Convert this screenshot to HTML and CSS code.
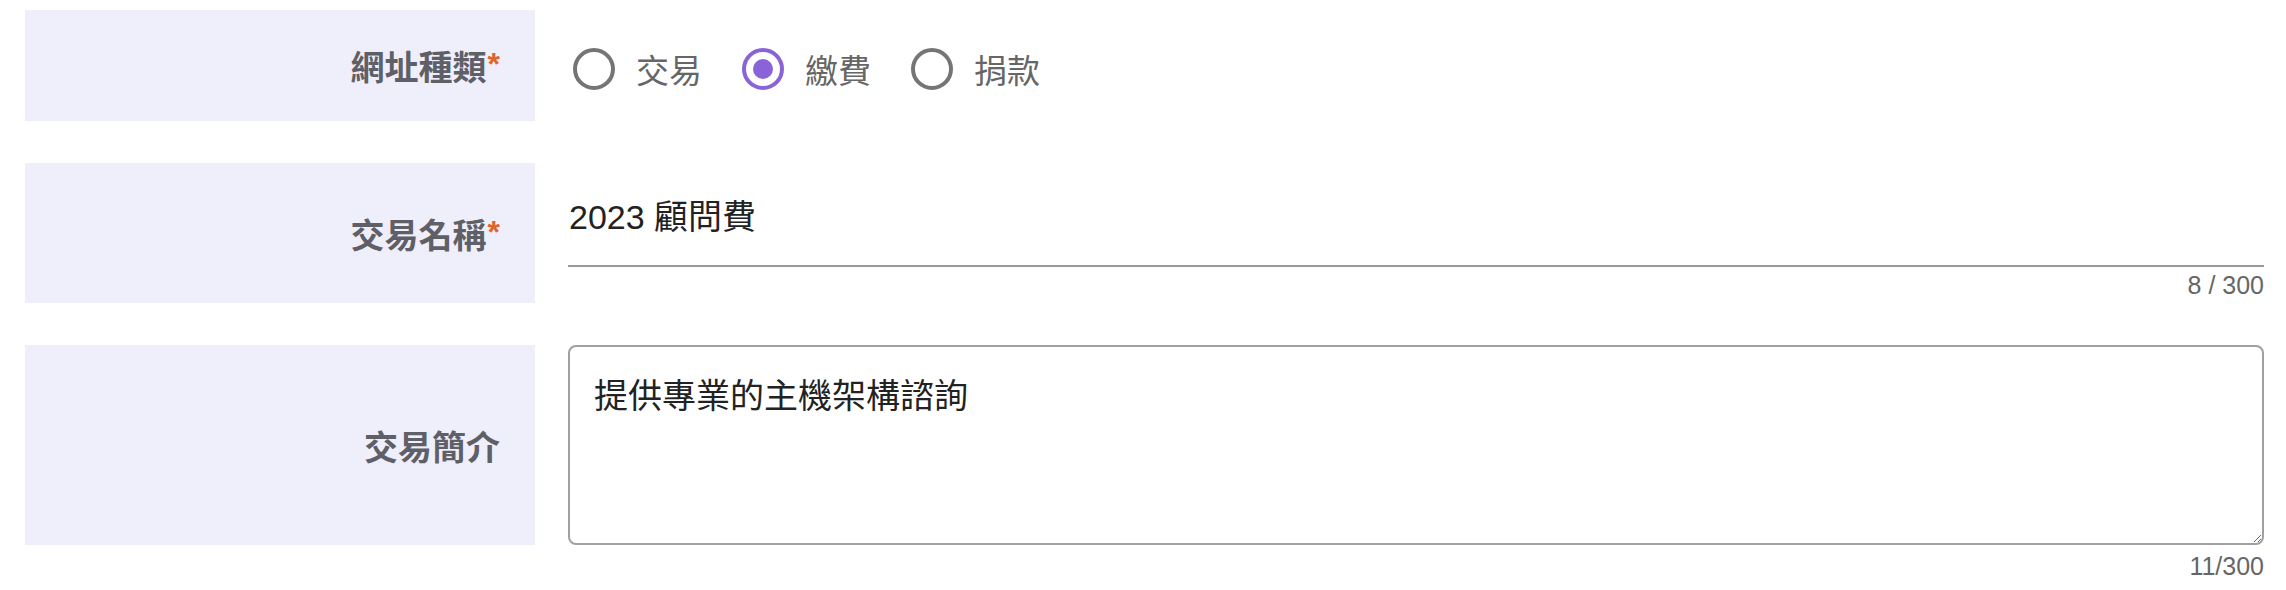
FILE: index.html
```html
<!DOCTYPE html>
<html lang="zh-Hant">
<head>
<meta charset="utf-8">
<title>表單</title>
<link rel="stylesheet" href="styles.css">
</head>
<body>
<form class="form">
  <div class="row row-radio">
    <div class="label">網址種類<span class="req">*</span></div>
    <div class="field radio-group">
      <label class="radio"><input type="radio" name="kind" value="trade"><span>交易</span></label>
      <label class="radio"><input type="radio" name="kind" value="pay" checked><span>繳費</span></label>
      <label class="radio"><input type="radio" name="kind" value="donate"><span>捐款</span></label>
    </div>
  </div>
  <div class="row row-input">
    <div class="label">交易名稱<span class="req">*</span></div>
    <input class="text-input" type="text" value="2023 顧問費">
    <div class="counter">8 / 300</div>
  </div>
  <div class="row row-textarea">
    <div class="label">交易簡介</div>
    <textarea class="textarea">提供專業的主機架構諮詢</textarea>
    <div class="counter">11/300</div>
  </div>
</form>
</body>
</html>
```

FILE: styles.css
```css
* { box-sizing: border-box; }

html, body {
  margin: 0;
  background: #ffffff;
}

body {
  padding: 10px 22px 0 25px;
  font-family: "Liberation Sans", "Noto Sans CJK TC", sans-serif;
}

.form {
  display: flex;
  flex-direction: column;
  gap: 42px;
}

.row {
  display: grid;
  grid-template-columns: 510px 1fr;
  column-gap: 33px;
}

.label {
  grid-column: 1;
  grid-row: 1;
  display: flex;
  align-items: center;
  justify-content: flex-end;
  padding-right: 35px;
  background: #efeefb;
  color: #5f5f68;
  font-size: 34px;
  font-weight: 700;
  white-space: nowrap;
}

.req {
  color: #e0652c;
  font-family: "Liberation Sans", sans-serif;
  font-size: 32px;
  position: relative;
  top: -1px;
  margin-left: 1px;
}

.row-radio { height: 111px; }

.field { grid-column: 2; grid-row: 1; }

.radio-group {
  display: flex;
  align-items: center;
  padding-top: 6px;
  padding-left: 5px;
  gap: 40px;
}

.radio {
  display: flex;
  align-items: center;
  gap: 21px;
  font-size: 33px;
  color: #666666;
  cursor: pointer;
}

.radio input {
  appearance: none;
  -webkit-appearance: none;
  margin: 0;
  width: 42px;
  height: 42px;
  border: 4px solid #757575;
  border-radius: 50%;
  display: grid;
  place-items: center;
  background: #fff;
}

.radio input:checked {
  border-color: #8a63d9;
}

.radio input:checked::after {
  content: "";
  width: 20px;
  height: 20px;
  border-radius: 50%;
  background: #8a63d9;
}

.row-input .label { grid-row: 1 / span 2; }

.text-input {
  grid-column: 2;
  grid-row: 1;
  width: 100%;
  height: 104px;
  margin: 0;
  padding: 0 0 0 1px;
  border: none;
  border-bottom: 2px solid #9a9a9a;
  font-family: "Liberation Sans", "Noto Sans CJK TC", sans-serif;
  font-size: 34px;
  color: #222222;
  background: transparent;
  outline: none;
}

.counter {
  grid-column: 2;
  grid-row: 2;
  text-align: right;
  font-size: 25px;
  color: #666666;
  line-height: 36px;
}

.row-textarea .label { height: 200px; }

.textarea {
  grid-column: 2;
  grid-row: 1;
  width: 100%;
  height: 200px;
  margin: 0;
  padding: 27px 24px;
  border: 2px solid #a0a0a0;
  border-radius: 8px;
  font-family: "Liberation Sans", "Noto Sans CJK TC", sans-serif;
  font-size: 34px;
  line-height: 1.35;
  color: #222222;
  resize: vertical;
  outline: none;
}

.row-textarea .counter {
  margin-top: 3px;
}
```
